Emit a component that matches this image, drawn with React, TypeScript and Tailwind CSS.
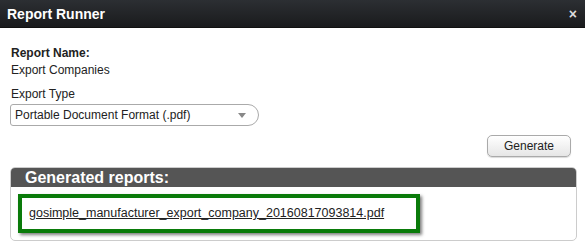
import React from "react";

export default function App() {
  return (
    <div
      className="w-[585px] h-[246px] bg-white overflow-hidden"
      style={{ fontFamily: '"Liberation Sans", Arial, sans-serif' }}
    >
      <div className="h-[28px] flex items-center justify-between pl-[7px] pr-[8px] bg-gradient-to-b from-[#2c2f33] to-[#1a1b1d] border-b border-[#111]">
        <span className="text-white font-bold text-[14px] leading-none">Report Runner</span>
        <span className="text-[#ddd] font-bold text-[14px] leading-none">×</span>
      </div>
      <div className="px-[10px] pt-[18px]">
        <div className="text-[12px] leading-[15px] font-bold text-[#222] pl-px">Report Name:</div>
        <div className="text-[12px] leading-[15px] text-[#222] pl-px mt-[2px]">Export Companies</div>
        <div className="text-[12px] leading-[15px] text-[#222] pl-px mt-[9px]">Export Type</div>
        <div className="mt-[2px] w-[249px] h-[22px] border border-[#aaa] rounded-l-[3px] rounded-r-[11px] flex items-center justify-between pl-[4px] pr-[12px]">
          <span className="text-[12px] text-[#222]">Portable Document Format (.pdf)</span>
          <svg width="8" height="5" viewBox="0 0 8 5"><path d="M0 0 L8 0 L4 5 Z" fill="#888" /></svg>
        </div>
        <div className="flex justify-end pr-[4px] mt-[9px]">
          <button className="w-[84px] h-[22px] rounded-[5px] border border-[#aaa] bg-gradient-to-b from-white to-[#e6e6e6] text-[12px] text-[#222] shadow-[0_1px_1px_rgba(0,0,0,0.15)]">
            Generate
          </button>
        </div>
        <div className="mt-[10px] w-[567px] rounded-[5px] border border-[#ccc] overflow-hidden">
          <div className="h-[19px] bg-[#555] flex items-center pl-[14px]">
            <span className="text-white font-bold text-[16px] leading-none">Generated reports:</span>
          </div>
          <div className="pt-[7px] pb-[7px] pl-[7px]">
            <div className="w-[402px] h-[39px] border-[4px] border-[#0a7b0a] shadow-[2px_2px_3px_rgba(0,0,0,0.5)] flex items-center pl-[7px]">
              <span className="text-[12.5px] text-[#222] underline">gosimple_manufacturer_export_company_20160817093814.pdf</span>
            </div>
          </div>
        </div>
      </div>
    </div>
  );
}
